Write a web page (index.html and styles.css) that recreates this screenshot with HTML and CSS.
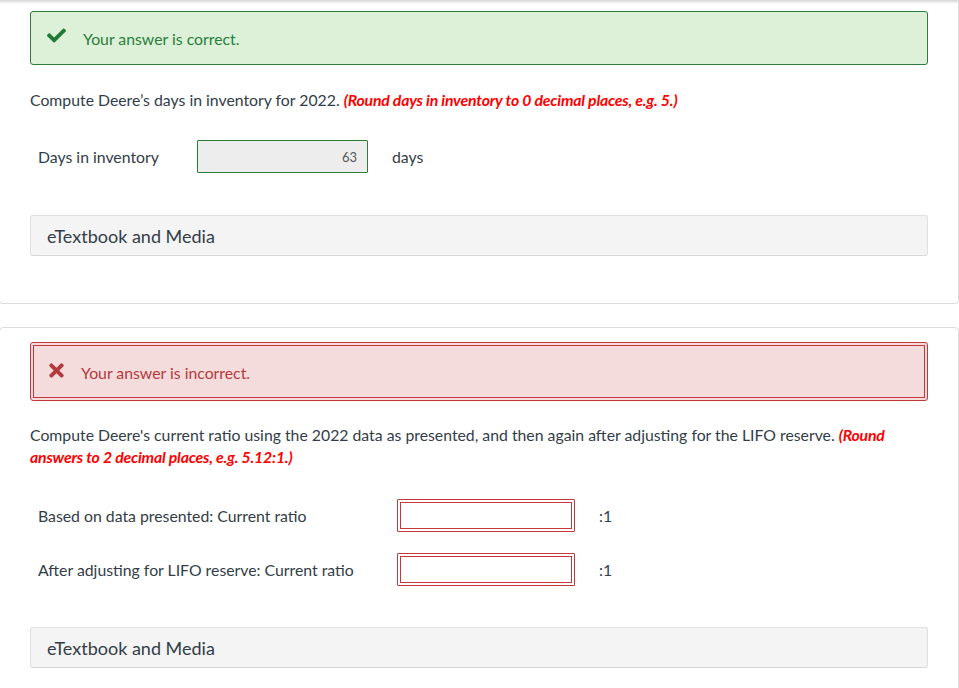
FILE: index.html
```html
<!DOCTYPE html>
<html lang="en">
<head>
  <meta charset="UTF-8">
  <meta name="viewport" content="width=device-width, initial-scale=1.0">
  <title>Question feedback</title>
  <link rel="stylesheet" href="styles.css">
</head>
<body>
  <div class="card card-first">
    <div class="alert alert-success">
      <svg class="icon icon-check" viewBox="0 0 512 512"><path d="M173.898 439.404l-166.4-166.4c-9.997-9.997-9.997-26.206 0-36.204l36.203-36.204c9.997-9.998 26.207-9.998 36.204 0L192 312.69 432.095 72.596c9.997-9.997 26.207-9.997 36.204 0l36.203 36.204c9.997 9.997 9.997 26.206 0 36.204l-294.4 294.401c-9.998 9.997-26.207 9.997-36.204-.001z"/></svg>
      <span>Your answer is correct.</span>
    </div>

    <p class="question">Compute Deere’s days in inventory for 2022. <span class="hint">(Round days in inventory to 0 decimal places, e.g. 5.)</span></p>

    <div class="answer-row">
      <label class="answer-label short">Days in inventory</label>
      <input type="text" class="answer correct" value="63" readonly>
      <span class="unit">days</span>
    </div>

    <div class="media">eTextbook and Media</div>
  </div>

  <div class="card card-second">
    <div class="alert alert-error">
      <svg class="icon icon-times" viewBox="0 0 352 512"><path d="M242.72 256l100.07-100.07c12.28-12.28 12.28-32.19 0-44.48l-22.24-22.24c-12.28-12.28-32.19-12.28-44.48 0L176 189.28 75.930 89.21c-12.28-12.28-32.19-12.28-44.48 0L9.21 111.45c-12.28 12.28-12.28 32.19 0 44.48L109.28 256 9.21 356.07c-12.28 12.28-12.28 32.19 0 44.48l22.24 22.24c12.28 12.28 32.2 12.28 44.48 0L176 322.72l100.07 100.07c12.28 12.28 32.2 12.28 44.48 0l22.24-22.24c12.28-12.28 12.28-32.19 0-44.48L242.72 256z"/></svg>
      <span>Your answer is incorrect.</span>
    </div>

    <p class="question">Compute Deere's current ratio using the 2022 data as presented, and then again after adjusting for the LIFO reserve. <span class="hint">(Round answers to 2 decimal places, e.g. 5.12:1.)</span></p>

    <div class="answer-row">
      <label class="answer-label long">Based on data presented: Current ratio</label>
      <input type="text" class="answer wrong">
      <span class="unit">:1</span>
    </div>

    <div class="answer-row second-row">
      <label class="answer-label long">After adjusting for LIFO reserve: Current ratio</label>
      <input type="text" class="answer wrong">
      <span class="unit">:1</span>
    </div>

    <div class="media">eTextbook and Media</div>
  </div>
</body>
</html>
```

FILE: styles.css
```css
body {
  margin: 0;
  font-family: Lato, "Open Sans", Arial, sans-serif;
  color: #333d47;
  font-size: 15.8px;
  overflow: hidden;
  background: linear-gradient(#d6d6d6, #fff 4px);
}

.card {
  width: 960px;
  box-sizing: border-box;
  margin-left: -1px;
  border: 1px solid #dcdcdc;
  border-radius: 4px;
  padding: 0 30px;
}

.card-first {
  border-top: none;
  border-top-left-radius: 0;
  border-top-right-radius: 0;
  padding-top: 11px;
  padding-bottom: 47px;
}

.card-second {
  margin-top: 23px;
  padding-top: 14px;
  padding-bottom: 40px;
  background: #fff;
}

.alert {
  display: flex;
  align-items: center;
  border-radius: 3px;
}

.alert-success {
  height: 54px;
  box-sizing: border-box;
  background: #dcf1d7;
  border: 1px solid #2b7d3c;
  color: #2b7d3c;
  padding-left: 16px;
}

.alert-error {
  height: 59px;
  box-sizing: border-box;
  background: #f4dcdc;
  border: 4px double #c4373a;
  color: #b5393c;
  padding-left: 15px;
  padding-top: 2px;
}

.icon {
  flex: none;
}

.icon-check {
  width: 19px;
  height: 19px;
  margin-right: 17px;
  margin-top: -6px;
  fill: #1f7a35;
}

.icon-times {
  width: 15px;
  height: 21px;
  margin-right: 17px;
  margin-top: -5px;
  fill: #b5393c;
}

.question {
  margin: 24px 0 0;
  line-height: 22px;
}

.hint {
  color: #f00;
  font-weight: bold;
  font-style: italic;
  letter-spacing: -0.2px;
}

.answer-row {
  display: flex;
  align-items: center;
  margin-top: 29px;
  padding-left: 8px;
}

.card-second .question {
  margin-top: 23px;
}

.card-second .answer-row {
  margin-top: 31px;
}

.card-second .second-row {
  margin-top: 21px;
}

.answer-label.short {
  width: 159px;
}

.answer-label.long {
  width: 359px;
}

.answer {
  box-sizing: border-box;
  height: 33px;
  font-family: Lato, Arial, sans-serif;
  font-size: 13px;
  outline: none;
  border-radius: 1px;
}

.answer.correct {
  width: 171px;
  background: #ededed;
  border: 1px solid #2b7d3c;
  color: #555;
  text-align: right;
  padding-right: 10px;
}

.answer.wrong {
  width: 178px;
  background: #fff;
  border: 4px double #c4373a;
}

.unit {
  margin-left: 24px;
}

.media {
  margin-top: 42px;
  height: 41px;
  box-sizing: border-box;
  background: #f4f4f4;
  border: 1px solid #e0e0e0;
  border-bottom-color: #d6d6d6;
  border-radius: 3px;
  padding-left: 16px;
  display: flex;
  align-items: center;
  font-size: 18px;
}

.card-second .media {
  margin-top: 41px;
}
```
